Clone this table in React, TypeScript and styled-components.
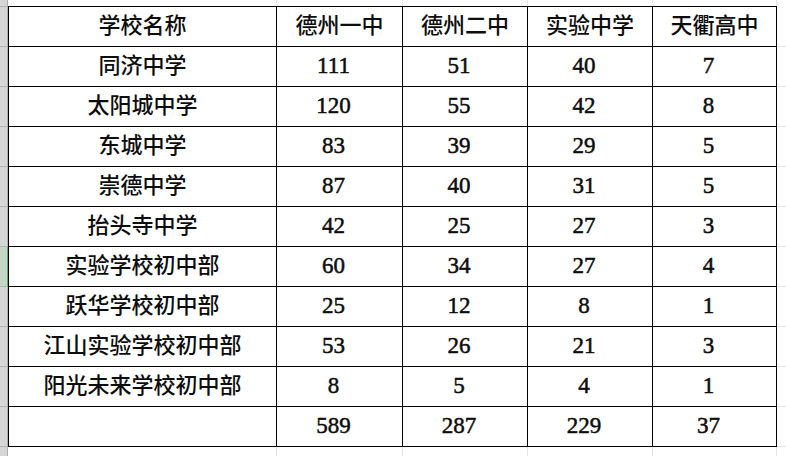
import React from "react";
import styled, { createGlobalStyle } from "styled-components";

const Global = createGlobalStyle`
  html, body { margin: 0; padding: 0; background: #ffffff; }
  body { width: 786px; height: 456px; overflow: hidden; }
`;

const Sheet = styled.div`
  display: flex;
  width: 786px;
  height: 456px;
  background: #ffffff;
  font-family: "Liberation Serif", "Noto Sans CJK SC", serif;
  color: #0d0d0d;
`;

const RowHeaders = styled.div`
  display: flex;
  flex-direction: column;
  width: 8px;
  flex: none;
`;

const RowHead = styled.div<{ $h: number; $sel?: boolean }>`
  height: ${(p) => p.$h}px;
  box-sizing: border-box;
  background: ${(p) => (p.$sel ? "#c4d6c4" : "#d6d6d6")};
  border-right: 1px solid ${(p) => (p.$sel ? "#5fa86e" : "#b0b0b0")};
  border-bottom: 1px solid #b4b4b4;
`;

const RowHeadFill = styled.div`
  flex: 1;
  background: #d6d6d6;
  border-right: 1px solid #b0b0b0;
`;

const Main = styled.div`
  display: flex;
  flex-direction: column;
  flex: 1;
`;

const COLS = "268px 126px 125px 125px 124px 1fr";

const GhostRow = styled.div<{ $h: number }>`
  display: grid;
  grid-template-columns: ${COLS};
  height: ${(p) => p.$h}px;
  padding-left: 1px;
`;

const GhostCell = styled.div`
  border-right: 1px solid #e4e4e4;
`;

const TableWrap = styled.div`
  display: flex;
`;

const Table = styled.div`
  display: grid;
  grid-template-columns: 268px 126px 125px 125px 124px;
  grid-auto-rows: 40px;
  border-left: 1px solid #000;
  border-top: 1px solid #000;
  flex: none;
`;

const Cell = styled.div<{ $num?: boolean }>`
  box-sizing: border-box;
  border-right: 1px solid #000;
  border-bottom: 1px solid #000;
  display: flex;
  align-items: center;
  justify-content: center;
  font-size: ${(p) => (p.$num ? "23px" : "22px")};
  font-weight: ${(p) => (p.$num ? 400 : 500)};
  line-height: 1;
  white-space: nowrap;
  padding-bottom: 1px;
  padding-right: ${(p) => (p.$num ? "12px" : "0")};
  -webkit-text-stroke: ${(p) => (p.$num ? "0.5px #0d0d0d" : "0")};
`;

const RightGrid = styled.div`
  flex: 1;
  display: grid;
  grid-template-rows: repeat(11, 40px);
  padding-top: 1px;
`;

const RightGridCell = styled.div`
  border-bottom: 1px solid #e4e4e4;
  box-sizing: border-box;
`;

const header = ["学校名称", "德州一中", "德州二中", "实验中学", "天衢高中"];
const rows: (string | number)[][] = [
  ["同济中学", 111, 51, 40, 7],
  ["太阳城中学", 120, 55, 42, 8],
  ["东城中学", 83, 39, 29, 5],
  ["崇德中学", 87, 40, 31, 5],
  ["抬头寺中学", 42, 25, 27, 3],
  ["实验学校初中部", 60, 34, 27, 4],
  ["跃华学校初中部", 25, 12, 8, 1],
  ["江山实验学校初中部", 53, 26, 21, 3],
  ["阳光未来学校初中部", 8, 5, 4, 1],
  ["", 589, 287, 229, 37],
];

export default function App() {
  const all = [header, ...rows];
  return (
    <>
      <Global />
      <Sheet>
        <RowHeaders>
          <RowHead $h={7} />
          {all.map((_, i) => (
            <RowHead key={i} $h={40} $sel={i === 6} />
          ))}
          <RowHeadFill />
        </RowHeaders>
        <Main>
          <GhostRow $h={6}>
            {[0, 1, 2, 3, 4].map((i) => (
              <GhostCell key={i} />
            ))}
          </GhostRow>
          <TableWrap>
            <Table>
              {all.map((r, ri) =>
                r.map((c, ci) => (
                  <Cell key={`${ri}-${ci}`} $num={typeof c === "number"}>
                    {c}
                  </Cell>
                ))
              )}
            </Table>
            <RightGrid>
              {all.map((_, i) => (
                <RightGridCell key={i} />
              ))}
            </RightGrid>
          </TableWrap>
          <GhostRow $h={10}>
            {[0, 1, 2, 3, 4].map((i) => (
              <GhostCell key={i} />
            ))}
          </GhostRow>
        </Main>
      </Sheet>
    </>
  );
}
